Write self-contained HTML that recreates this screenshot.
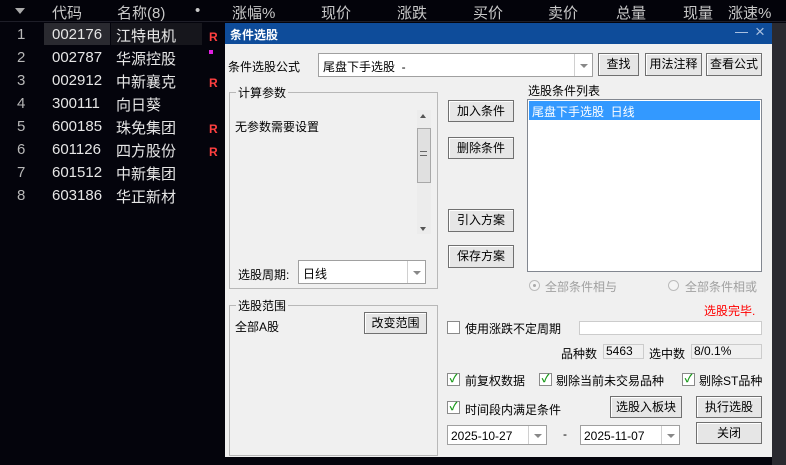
<!DOCTYPE html>
<html><head><meta charset="utf-8"><style>
*{margin:0;padding:0;box-sizing:border-box}
body{width:786px;height:465px;background:#04040c;position:relative;overflow:hidden;font-family:"Liberation Sans","Noto Sans CJK SC",sans-serif;}
.a{position:absolute;white-space:nowrap}
.h{color:#c8c8c8;font-size:15px;top:2px}
.n{color:#b8b8b8;font-size:15px;left:17px}
.c{color:#e6e6e6;font-size:15px;left:52px}
.m{color:#e6e6e6;font-size:15px;left:116px}
.r{color:#ff4040;font-size:12px;font-weight:bold;left:209px}
.d{font-size:12px;color:#000}
.btn{position:absolute;background:#e6e6e6;border:1px solid #707070;box-shadow:inset 1px 1px 0 #fff;font-size:12px;text-align:center;color:#000}
.box{position:absolute;background:#fff;border:1px solid #a0a0a0}
.cb{position:absolute;width:13px;height:13px;background:#fff;border:1px solid #8a8a8a;font-size:11px;line-height:11px;text-align:center;color:#1a9a1a;font-weight:bold}
.grp{position:absolute;border:1px solid #b8b8b8}
.gl{position:absolute;background:#f0f0f0;font-size:12px;padding:0 2px;top:-9px;left:6px}
.arr{position:absolute;right:0;top:0;bottom:0;width:18px;border-left:1px solid #d0d0d0}
.arr:after{content:"";position:absolute;left:5px;top:45%;border:4px solid transparent;border-top:4px solid #888;border-bottom:0}
</style></head><body>
<div class="a" style="left:0;top:0;width:786px;height:22px;background:#03030a;border-bottom:1px solid #1e1e28"></div>
<div class="a" style="left:15px;top:8px;border:5px solid transparent;border-top:6px solid #aaa"></div>
<div class="a h" style="left:52px">代码</div>
<div class="a h" style="left:117px">名称(8)</div>
<div class="a h" style="left:195px">•</div>
<div class="a h" style="left:232px">涨幅%</div>
<div class="a h" style="left:321px">现价</div>
<div class="a h" style="left:397px">涨跌</div>
<div class="a h" style="left:473px">买价</div>
<div class="a h" style="left:548px">卖价</div>
<div class="a h" style="left:616px">总量</div>
<div class="a h" style="left:683px">现量</div>
<div class="a h" style="left:728px">涨速%</div>
<div class="a" style="left:44px;top:23px;width:66px;height:22px;background:#2a2a30"></div>
<div class="a" style="left:111px;top:23px;width:91px;height:22px;background:#16161c"></div>
<div class="a n" style="top:26px">1</div><div class="a c" style="top:26px">002176</div><div class="a m" style="top:25px">江特电机</div><div class="a r" style="top:30px">R</div>
<div class="a n" style="top:49px">2</div><div class="a c" style="top:49px">002787</div><div class="a m" style="top:48px">华源控股</div><div class="a" style="left:209px;top:50px;width:4px;height:4px;background:#e020e0"></div>
<div class="a n" style="top:72px">3</div><div class="a c" style="top:72px">002912</div><div class="a m" style="top:71px">中新襄克</div><div class="a r" style="top:76px">R</div>
<div class="a n" style="top:95px">4</div><div class="a c" style="top:95px">300111</div><div class="a m" style="top:94px">向日葵</div>
<div class="a n" style="top:118px">5</div><div class="a c" style="top:118px">600185</div><div class="a m" style="top:117px">珠免集团</div><div class="a r" style="top:122px">R</div>
<div class="a n" style="top:141px">6</div><div class="a c" style="top:141px">601126</div><div class="a m" style="top:140px">四方股份</div><div class="a r" style="top:145px">R</div>
<div class="a n" style="top:164px">7</div><div class="a c" style="top:164px">601512</div><div class="a m" style="top:163px">中新集团</div>
<div class="a n" style="top:187px">8</div><div class="a c" style="top:187px">603186</div><div class="a m" style="top:186px">华正新材</div>
<div class="a" style="left:772px;top:23px;width:14px;height:442px;background:#2a2a30"></div>

<div class="a" style="left:225px;top:23px;width:547px;height:434px;background:#f0f0f0">
<div class="a" style="left:0;top:0;width:547px;height:21px;background:#0e4c9a;color:#fff;font-size:12px;font-weight:bold;padding:3px 0 0 5px">条件选股</div>
<div class="a" style="left:510px;top:9px;width:13px;height:1px;background:#a9c0e0"></div>
<div class="a" style="left:530px;top:-1px;color:#a9c0e0;font-size:17px">×</div>
</div>
<div style="position:absolute;left:0;top:0">
<div class="a d" style="left:228px;top:58px">条件选股公式</div>
<div class="box" style="left:318px;top:53px;width:275px;height:24px"><span class="a d" style="left:4px;top:4px">尾盘下手选股&nbsp;&nbsp;-</span><div class="arr"></div></div>
<div class="btn" style="left:598px;top:53px;width:41px;height:23px;line-height:21px">查找</div>
<div class="btn" style="left:645px;top:53px;width:57px;height:23px;line-height:21px">用法注释</div>
<div class="btn" style="left:706px;top:53px;width:56px;height:23px;line-height:21px">查看公式</div>
<div class="grp" style="left:229px;top:92px;width:209px;height:197px"><div class="gl">计算参数</div></div>
<div class="a d" style="left:235px;top:118px">无参数需要设置</div>
<div class="a" style="left:417px;top:110px;width:14px;height:124px;background:#ececec"></div>
<div class="a" style="left:417px;top:128px;width:14px;height:55px;background:#e0e0e0;border:1px solid #a8a8a8"></div>
<div class="a" style="left:420px;top:114px;border:3px solid transparent;border-bottom:4px solid #555;border-top:0"></div>
<div class="a" style="left:420px;top:227px;border:3px solid transparent;border-top:4px solid #555;border-bottom:0"></div>
<div class="a" style="left:420px;top:151px;width:7px;height:5px;border-top:1px solid #666;border-bottom:1px solid #666"></div>
<div class="a d" style="left:238px;top:266px">选股周期:</div>
<div class="box" style="left:298px;top:260px;width:128px;height:24px"><span class="a d" style="left:4px;top:4px">日线</span><div class="arr"></div></div>
<div class="btn" style="left:448px;top:100px;width:66px;height:22px;line-height:20px">加入条件</div>
<div class="btn" style="left:448px;top:137px;width:66px;height:22px;line-height:20px">删除条件</div>
<div class="btn" style="left:448px;top:209px;width:66px;height:23px;line-height:21px">引入方案</div>
<div class="btn" style="left:448px;top:245px;width:66px;height:23px;line-height:21px">保存方案</div>
<div class="a d" style="left:528px;top:82px">选股条件列表</div>
<div class="box" style="left:527px;top:99px;width:235px;height:173px;border-color:#828790"></div>
<div class="a" style="left:529px;top:101px;width:231px;height:19px;background:#3399ff;color:#fff;font-size:12px;padding:2px 0 0 3px">尾盘下手选股&nbsp;&nbsp;日线</div>
<div class="a" style="left:529px;top:280px;width:11px;height:11px;border-radius:50%;border:1px solid #bbb;background:#f4f4f4"></div>
<div class="a" style="left:533px;top:284px;width:3px;height:3px;border-radius:50%;background:#aaa"></div>
<div class="a d" style="left:545px;top:278px;color:#a0a0a0">全部条件相与</div>
<div class="a" style="left:668px;top:280px;width:11px;height:11px;border-radius:50%;border:1px solid #bbb;background:#f4f4f4"></div>
<div class="a d" style="left:685px;top:278px;color:#a0a0a0">全部条件相或</div>
<div class="grp" style="left:229px;top:305px;width:209px;height:151px"><div class="gl">选股范围</div></div>
<div class="a d" style="left:235px;top:318px">全部A股</div>
<div class="btn" style="left:364px;top:312px;width:63px;height:22px;line-height:20px">改变范围</div>
<div class="a d" style="left:704px;top:302px;color:#f00">选股完毕.</div>
<div class="cb" style="left:447px;top:321px"></div>
<div class="a d" style="left:465px;top:320px">使用涨跌不定周期</div>
<div class="box" style="left:579px;top:321px;width:183px;height:14px;border-color:#ccc"></div>
<div class="a d" style="left:561px;top:345px">品种数</div>
<div class="a" style="left:603px;top:344px;width:41px;height:15px;border:1px solid #ccc;font-size:12px;padding-left:2px;line-height:13px">5463</div>
<div class="a d" style="left:649px;top:345px">选中数</div>
<div class="a" style="left:691px;top:344px;width:71px;height:15px;border:1px solid #ccc;font-size:12px;padding-left:2px;line-height:13px">8/0.1%</div>
<div class="cb" style="left:447px;top:373px">✓</div><div class="a d" style="left:465px;top:372px">前复权数据</div>
<div class="cb" style="left:539px;top:373px">✓</div><div class="a d" style="left:556px;top:372px">剔除当前未交易品种</div>
<div class="cb" style="left:682px;top:373px">✓</div><div class="a d" style="left:699px;top:372px">剔除ST品种</div>
<div class="cb" style="left:447px;top:401px">✓</div><div class="a d" style="left:465px;top:401px">时间段内满足条件</div>
<div class="btn" style="left:610px;top:396px;width:72px;height:22px;line-height:20px">选股入板块</div>
<div class="btn" style="left:696px;top:396px;width:66px;height:22px;line-height:20px">执行选股</div>
<div class="box" style="left:447px;top:425px;width:100px;height:20px"><span class="a d" style="left:3px;top:3px">2025-10-27</span><div class="arr"></div></div>
<div class="a d" style="left:563px;top:427px">-</div>
<div class="box" style="left:580px;top:425px;width:100px;height:20px"><span class="a d" style="left:3px;top:3px">2025-11-07</span><div class="arr"></div></div>
<div class="btn" style="left:696px;top:422px;width:66px;height:22px;line-height:20px">关闭</div>
</div>
</body></html>
